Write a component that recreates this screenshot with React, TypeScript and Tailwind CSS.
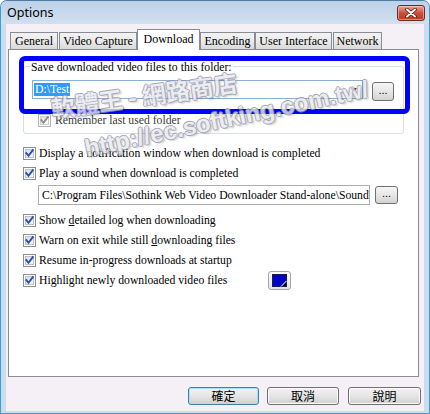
import React from "react";

const SERIF = "font-['Liberation_Serif','Times_New_Roman',serif]";

function Check({ disabled = false }: { disabled?: boolean }) {
  return (
    <svg width="13" height="13" viewBox="0 0 13 13" className="shrink-0">
      <defs>
        <linearGradient id="cbg" x1="0" y1="0" x2="1" y2="1">
          <stop offset="0" stopColor="#d8dde4" />
          <stop offset="1" stopColor="#ffffff" />
        </linearGradient>
      </defs>
      <rect x="0.5" y="0.5" width="12" height="12" fill="#fdfdfd" stroke={disabled ? "#b4b4b4" : "#8e8f8f"} />
      <rect x="2.5" y="2.5" width="8" height="8" fill="url(#cbg)" stroke={disabled ? "#d0d0d0" : "#b9c1cb"} strokeWidth="1" />
      <path
        d="M3.3 6.2 L5.5 8.8 L9.8 3.2"
        fill="none"
        stroke={disabled ? "#8f8f8f" : "#2a4eb5"}
        strokeWidth="1.9"
        strokeLinecap="square"
      />
    </svg>
  );
}

function DotsButton({ className = "" }: { className?: string }) {
  return (
    <div
      className={`flex items-end justify-center rounded-[3px] border border-[#707070] bg-gradient-to-b from-[#f6f6f6] via-[#e6e6e6] to-[#d2d2d2] text-[11px] leading-none text-black pb-[4px] font-['Liberation_Sans',sans-serif] ${className}`}
    >
      ...
    </div>
  );
}

function Tab({ label, width, selected = false, ml = 0 }: { label: string; width: number; selected?: boolean; ml?: number }) {
  if (selected) {
    return (
      <div
        className="relative z-10 -mb-px flex h-[21px] items-start justify-center border border-b-0 border-[#898c95] bg-white pt-[1px] text-[12px] leading-[16px]"
        style={{ width, marginLeft: ml }}
      >
        {label}
      </div>
    );
  }
  return (
    <div
      className="flex h-[17px] items-center justify-center border border-b-0 border-[#898c95] bg-gradient-to-b from-[#f2f2f2] via-[#ebebeb] to-[#d9d9d9] text-[12px] leading-[15px]"
      style={{ width, marginLeft: ml }}
    >
      {label}
    </div>
  );
}

function Row({ children, className = "" }: { children: React.ReactNode; className?: string }) {
  return (
    <div className={`flex h-[20px] items-center ml-[14px] ${className}`}>
      <Check />
      <span className="ml-[3px] whitespace-nowrap text-[11.7px] leading-[15px]">{children}</span>
    </div>
  );
}

function BigButton({ label, width, def = false, mr = 0 }: { label: string; width: number; def?: boolean; mr?: number }) {
  return (
    <div
      className={`flex h-[18px] items-center justify-center rounded-[3px] border ${
        def ? "border-[#3c7fb1] shadow-[inset_0_0_0_1px_#a7e0f7]" : "border-[#707070] shadow-[inset_0_0_0_1px_#fbfbfb]"
      } bg-gradient-to-b from-[#f3f3f3] via-[#e5e5e5] to-[#d0d0d0] text-[12px] leading-none text-black font-['Noto_Sans_CJK_TC','Noto_Sans_CJK_SC',sans-serif]`}
      style={{ width, marginRight: mr }}
    >
      {label}
    </div>
  );
}

export default function App() {
  return (
    <div className="relative h-[414px] w-[430px] overflow-hidden rounded-t-[7px] border border-[#4e7aa3] border-b-[#2ea6d6] border-x-[#3a9fcf] bg-[#cadcef]">
      {/* Title bar */}
      <div className="flex h-[23px] items-start justify-between bg-gradient-to-b from-[#bcd1e8] to-[#d2e0ef]">
        <span className="ml-[6px] mt-[3px] text-[12.5px] leading-[17px] text-black font-['Noto_Sans','Open_Sans',sans-serif]">
          Options
        </span>
        <div className="mr-[4px] mt-[4px] flex h-[16px] w-[28px] items-center justify-center rounded-[3px] border border-[#6b2a22] bg-gradient-to-b from-[#e8a898] via-[#c9503e] to-[#b83a24] shadow-[inset_0_0_0_1px_rgba(255,220,210,0.5)]">
          <svg width="12" height="10" viewBox="0 0 12 10">
            <path d="M2 1.5 L10 8.5 M10 1.5 L2 8.5" stroke="#5b1a10" strokeWidth="3.6" strokeLinecap="round" />
            <path d="M2 1.5 L10 8.5 M10 1.5 L2 8.5" stroke="#ffffff" strokeWidth="2" strokeLinecap="round" />
          </svg>
        </div>
      </div>

      {/* Client area */}
      <div className={`mx-[5px] flex h-[387px] flex-col bg-[#f5f0f5] text-black ${SERIF}`}>
        {/* Tabs */}
        <div className="ml-[4px] mt-[5px] flex h-[20px] items-end">
          <Tab label="General" width={48} />
          <Tab label="Video Capture" width={78} ml={1} />
          <Tab label="Download" width={63} selected />
          <Tab label="Encoding" width={55} />
          <Tab label="User Interface" width={77} />
          <Tab label="Network" width={49} ml={1} />
        </div>

        {/* Panel */}
        <div className="ml-[2px] h-[328px] w-[411px] border border-[#898c95] bg-white">
          {/* Groupbox */}
          <div className="relative ml-[14px] mt-[16px] h-[68px] w-[381px] rounded-[3px] border border-[#d5dfe5]">
            <span className="absolute left-[7px] -top-[7px] bg-white pr-[1px] text-[11.7px] leading-[15px] whitespace-nowrap">
              Save downloaded video files to this folder:
            </span>
            <div className="ml-[8px] mt-[13px] flex items-start">
              <div className="flex h-[19px] w-[331px] items-center justify-between border border-[#8aaed6] bg-white pl-[1px] pr-[5px]">
                <span className="bg-[#3399ff] px-[1px] text-[11.7px] leading-[13px] text-white">{"D:\\Test"}</span>
                <svg width="7" height="4" viewBox="0 0 7 4">
                  <path d="M0 0 H7 L3.5 4 Z" fill="#3a3a3a" />
                </svg>
              </div>
              <DotsButton className="ml-[9px] mt-[2px] h-[19px] w-[22px]" />
            </div>
            <div className="ml-[14px] mt-[12px] flex h-[14px] items-center">
              <Check disabled />
              <span className="ml-[4px] whitespace-nowrap text-[11.7px] leading-[15px] text-[#3c3c3c]">Remember last used folder</span>
            </div>
          </div>

          <Row className="mt-[9px] h-[18px]">Display a notification window when download is completed</Row>
          <Row className="h-[18px]">Play a sound when download is completed</Row>
          <div className="ml-[29px] mt-[2px] flex items-center">
            <div className="flex h-[20px] w-[332px] items-center overflow-hidden border border-[#abadb3] bg-white pl-[3px]">
              <span className="block w-full overflow-hidden whitespace-nowrap text-[11.7px] leading-[15px]">
                {"C:\\Program Files\\Sothink Web Video Downloader Stand-alone\\Sound\\notify.wav"}
              </span>
            </div>
            <DotsButton className="ml-[5px] h-[18px] w-[23px]" />
          </div>

          <Row className="mt-[5px]">
            Show <u>d</u>etailed log when downloading
          </Row>
          <Row>
            Warn on exit while still <u>d</u>ownloading files
          </Row>
          <Row className="h-[19px]">Resume in-progress downloads at startup</Row>
          <div className="ml-[14px] flex h-[20px] items-center">
            <div className="flex w-[245px] items-center">
              <Check />
              <span className="ml-[3px] whitespace-nowrap text-[11.7px] leading-[15px]">Highlight newly downloaded video files</span>
            </div>
            <div className="flex h-[19px] w-[23px] items-center justify-center rounded-[3px] border border-[#a5a5a5] bg-gradient-to-b from-[#fbfbfb] to-[#e4e4e4]">
              <svg width="15" height="13" viewBox="0 0 15 13">
                <rect x="0.5" y="0.5" width="14" height="12" fill="#0000c8" stroke="#1a1a5a" />
                <path d="M10 12 L14 8 L14 12 Z" fill="#000" />
                <path d="M9 12.5 L14.5 7" stroke="#fff" strokeWidth="1" />
              </svg>
            </div>
          </div>
        </div>

        {/* Bottom buttons */}
        <div className="mr-[3px] mt-[10px] flex justify-end">
          <BigButton label="確定" width={71} def mr={8} />
          <BigButton label="取消" width={72} mr={9} />
          <BigButton label="說明" width={73} />
        </div>
      </div>

      {/* Blue annotation box */}
      <div className="pointer-events-none absolute left-[18px] top-[55px] h-[58px] w-[391px] rounded-[6px] border-[5px] border-[#0000ff]" />

      {/* Watermark */}
      <div className="pointer-events-none absolute left-[50px] top-[92px] origin-left -rotate-[8deg] whitespace-nowrap text-[24px] font-bold leading-[30px] text-white/80 opacity-80 font-['Noto_Sans_CJK_TC','Noto_Sans_CJK_SC',sans-serif] [text-shadow:1px_0_#8e90a6,-1px_0_#8e90a6,0_1px_#8e90a6,0_-1px_#8e90a6,2px_2px_2px_rgba(0,0,0,0.25)]">
        軟體王 - 網路商店
      </div>
      <div className="pointer-events-none absolute left-[84px] top-[134px] origin-left -rotate-[12deg] whitespace-nowrap text-[24px] font-bold leading-[28px] text-white/80 opacity-80 font-['Liberation_Sans',Arial,sans-serif] [text-shadow:1px_0_#8e90a6,-1px_0_#8e90a6,0_1px_#8e90a6,0_-1px_#8e90a6,2px_2px_2px_rgba(0,0,0,0.25)]">
        http://ec.softking.com.tw/
      </div>
    </div>
  );
}
